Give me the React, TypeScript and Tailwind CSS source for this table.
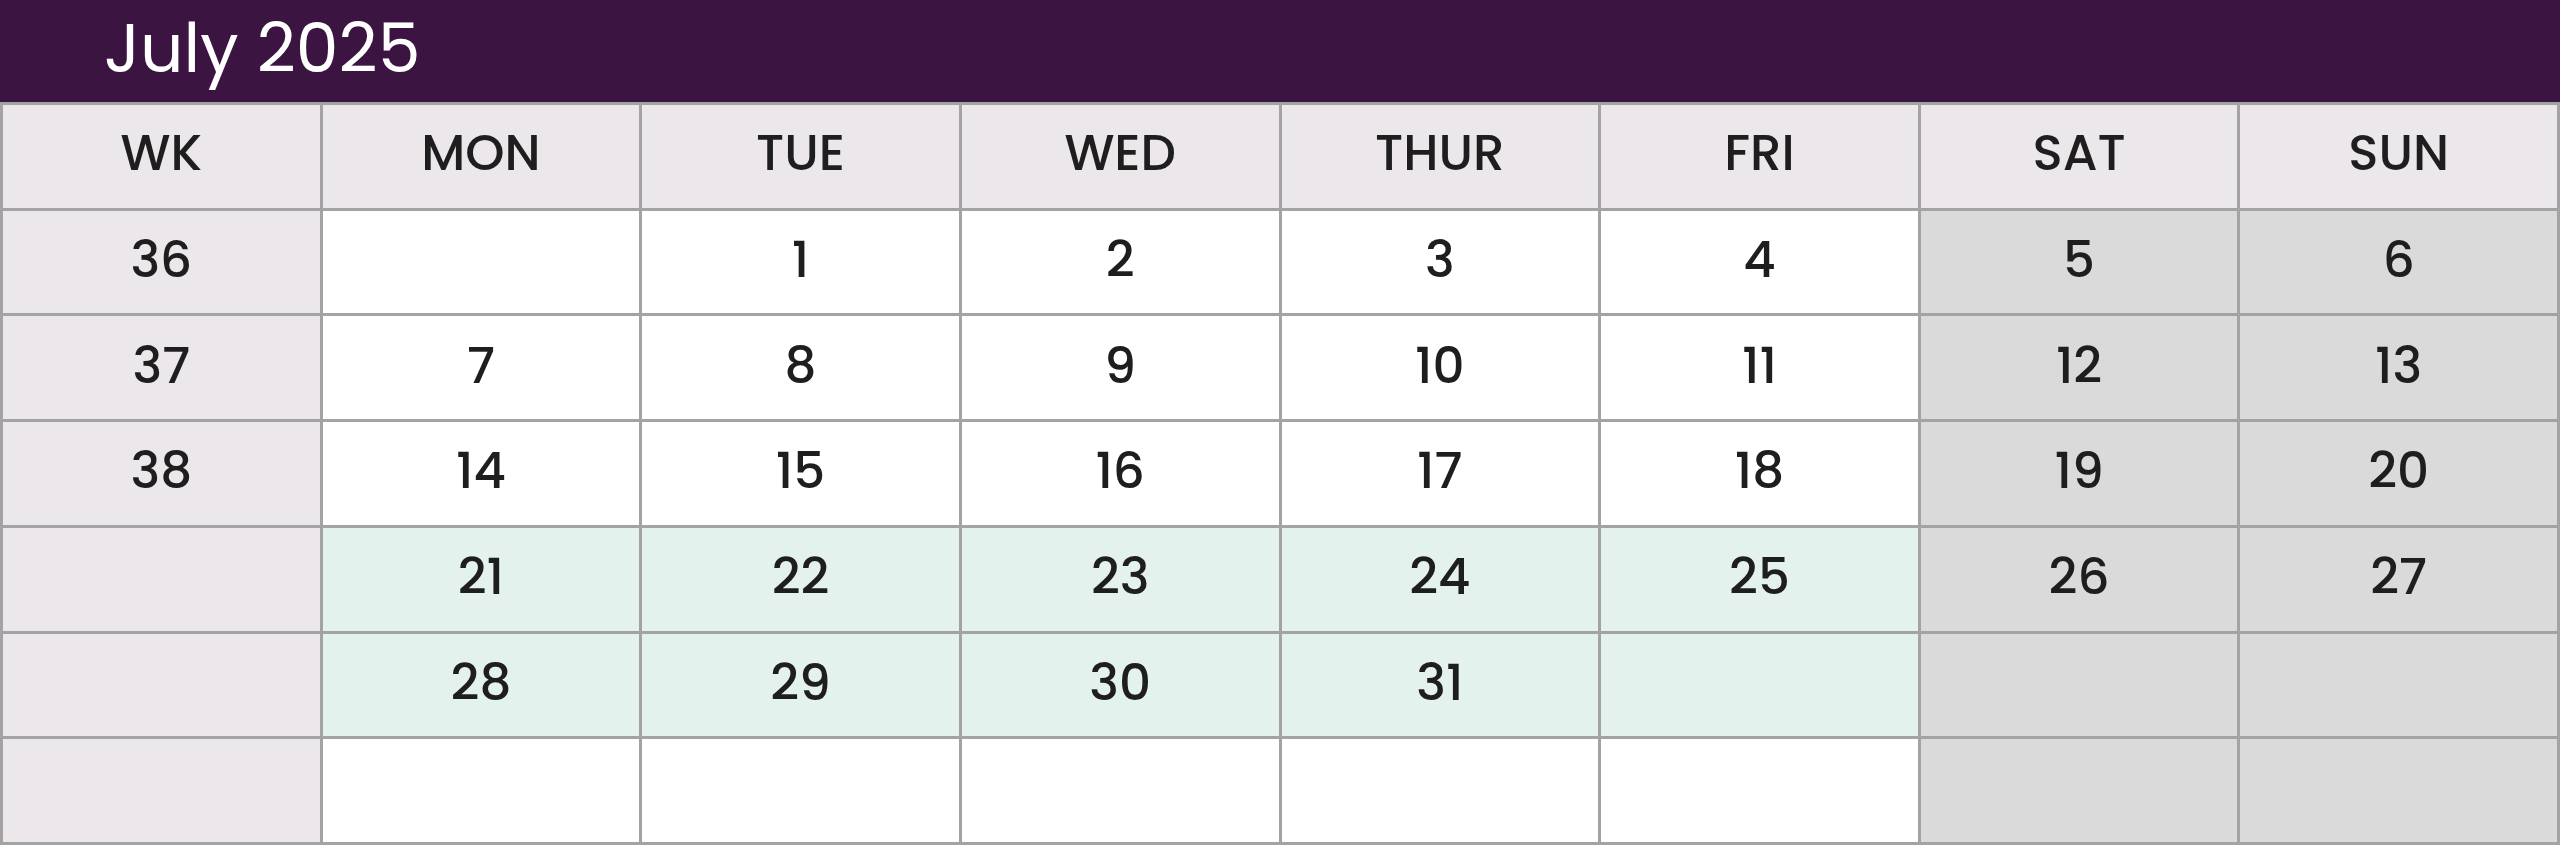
const headers = ["WK", "MON", "TUE", "WED", "THUR", "FRI", "SAT", "SUN"];

// each week: [week number, mon..sun]
const weeks: string[][] = [
  ["36", "", "1", "2", "3", "4", "5", "6"],
  ["37", "7", "8", "9", "10", "11", "12", "13"],
  ["38", "14", "15", "16", "17", "18", "19", "20"],
  ["", "21", "22", "23", "24", "25", "26", "27"],
  ["", "28", "29", "30", "31", "", "", ""],
  ["", "", "", "", "", "", "", ""],
];

// rows that are highlighted on weekdays
const highlighted = [3, 4];

function cellBg(row: number, col: number) {
  if (col === 0) return "bg-[#ebe7eb]";
  if (col >= 6) return "bg-[#dadada]";
  if (highlighted.includes(row)) return "bg-[#e3f2ed]";
  return "bg-white";
}

export default function App() {
  return (
    <div
      className="w-[2560px] h-[845px] flex flex-col bg-white text-[#1e1e1e]"
      style={{ fontFamily: "Poppins, Inter, 'Open Sans', sans-serif" }}
    >
      <div className="h-[102px] shrink-0 bg-[#3b1441] flex items-center pl-[104px]">
        <h1 className="text-[68px] leading-none text-white font-normal pb-[4px]">July 2025</h1>
      </div>

      <div className="flex-1 grid grid-cols-8 grid-rows-7 gap-[3px] border-[3px] border-[#a3a3a3] bg-[#a3a3a3]">
        {headers.map((h) => (
          <div key={h} className="bg-[#ebe7eb] flex items-center justify-center text-[50px] font-medium leading-none pb-[6px]">
            {h}
          </div>
        ))}
        {weeks.map((week, r) =>
          week.map((val, c) => (
            <div
              key={r + "-" + c}
              className={`${cellBg(r, c)} flex items-center justify-center text-[50px] font-medium leading-none pb-[4px]`}
            >
              {val}
            </div>
          ))
        )}
      </div>
    </div>
  );
}
